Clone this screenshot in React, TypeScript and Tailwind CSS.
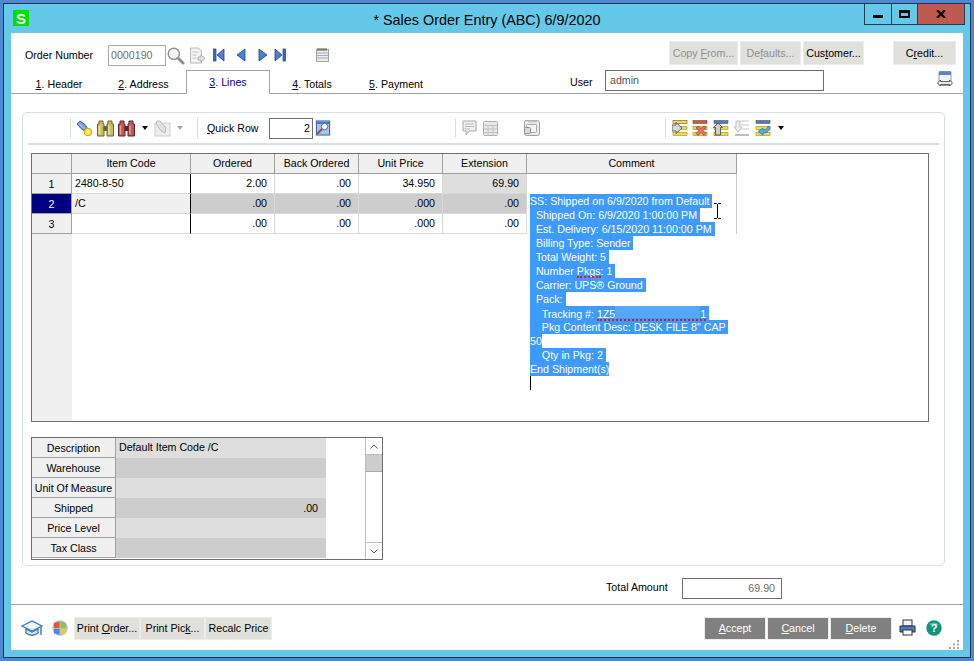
import React from "react";

const NavIcon: React.FC<{ dir: "first" | "prev" | "next" | "last" }> = ({ dir }) => {
  const flip = dir === "next" || dir === "last";
  const bar = dir === "first" || dir === "last";
  return (
    <svg width="12" height="14" viewBox="0 0 12 14" className={flip ? "-scale-x-100" : ""}>
      {bar && <rect x="0.5" y="1" width="2.5" height="12" fill="#3f6fc0" stroke="#1f3f80" strokeWidth="0.7" />}
      <path d={bar ? "M11 1v12L4 7z" : "M10 1v12L2 7z"} fill="#4f7fd0" stroke="#1f3f80" strokeWidth="0.8" />
    </svg>
  );
};

const SearchIcon = () => (
  <svg width="18" height="18" viewBox="0 0 18 18">
    <path d="M10.5 10.5l5.5 5.5" stroke="#8f8f8a" strokeWidth="3" strokeLinecap="round" />
    <circle cx="6.8" cy="6.8" r="5.6" fill="#f2f5f5" stroke="#8c9090" strokeWidth="1.4" />
  </svg>
);

const DocArrowIcon = () => (
  <svg width="17" height="17" viewBox="0 0 17 17">
    <path d="M1.5 1h8l3 3v12h-11z" fill="#f3f3f3" stroke="#b5b5b5" />
    <path d="M3.500 5h6M3.500 8h4M3.500 11h4" stroke="#c4c4c4" />
    <path d="M9 10h3V8l4 3.500-4 3.500v-2H9z" fill="#e6e6e6" stroke="#a8a8a8" />
  </svg>
);

const NotebookIcon = () => (
  <svg width="13" height="14" viewBox="0 0 13 14">
    <rect x="0.5" y="1.500" width="12" height="12" fill="#f4ecd8" stroke="#9ca3a8" />
    <path d="M1 5h11M1 7.500h11M1 10h11" stroke="#8fb0d8" />
    <path d="M2 0v3M4 0v3M6 0v3M8 0v3M10 0v3" stroke="#555" />
  </svg>
);

const Flashlight = () => (
  <svg width="17" height="17" viewBox="0 0 17 17">
    <path d="M1 4l3-3 5 3.500 2 3-3 3-3-2z" fill="#7f9fe0" stroke="#3c5a98" />
    <path d="M3 3.500l5 5" stroke="#c8d8f8" />
    <circle cx="12" cy="12" r="3.800" fill="#fbe34a" stroke="#c4a410" />
    <circle cx="12" cy="12" r="1.500" fill="#fff8c0" />
  </svg>
);

const Binoculars: React.FC<{ fill: string; stroke: string; light: string }> = ({ fill, stroke, light }) => (
  <svg width="17" height="17" viewBox="0 0 17 17">
    <path d="M2 1h4v3h1v12H.5V4H2zM11 1h4v3h1.500v12H10V4h1z" fill={fill} stroke={stroke} />
    <rect x="6.500" y="6" width="4" height="5" fill={stroke} />
    <path d="M2.500 5.500v9M12 5.500v9" stroke={light} strokeWidth="1.500" />
  </svg>
);

const Caret: React.FC<{ color?: string; className?: string }> = ({ color = "#000", className }) => (
  <svg width="6" height="4" viewBox="0 0 6 4" className={className}>
    <path d="M0 0h6L3 4z" fill={color} />
  </svg>
);

const DisabledPage = () => (
  <svg width="17" height="17" viewBox="0 0 17 17">
    <rect x="1" y="3" width="15" height="13" fill="#eeeeee" stroke="#cfcfcf" />
    <path d="M3 1l3 0 6 7-1 5-4-2-5-7z" fill="#e0e0e0" stroke="#bdbdbd" />
  </svg>
);

const QuickFind = () => (
  <svg width="16" height="16" viewBox="0 0 16 16">
    <rect width="16" height="16" fill="#efe9d8" />
    <rect x="1.500" y="1" width="13" height="14" fill="#a8c4ec" stroke="#3c68b0" />
    <path d="M2 2h12v2H2z" fill="#4a78c8" />
    <circle cx="9.500" cy="6.500" r="3.200" fill="#ffffff" stroke="#3c68b0" />
    <path d="M7 9l-5 5" stroke="#a04a40" strokeWidth="2" />
  </svg>
);

const CommentIcon = () => (
  <svg width="15" height="17" viewBox="0 0 15 17">
    <path d="M1 1h13v10H7l-3 4v-4H1z" fill="#f0f0f0" stroke="#a8a8a8" />
    <path d="M3 4h9M3 6.500h9M3 9h5" stroke="#b8b8b8" />
  </svg>
);

const GridIcon = () => (
  <svg width="15" height="15" viewBox="0 0 15 15">
    <rect x="0.5" y="0.5" width="14" height="14" rx="1" fill="#e8e8e8" stroke="#adadad" />
    <path d="M0.5 4.500h14M0.5 8h14M0.5 11.500h14M5 4v11M10 4v11" stroke="#c2c2c2" />
  </svg>
);

const WindowsIcon = () => (
  <svg width="16" height="16" viewBox="0 0 16 16">
    <rect x="0.5" y="0.5" width="15" height="15" rx="2" fill="#ececec" stroke="#9f9f9f" />
    <path d="M4 1.500h9" stroke="#c5c5c5" strokeWidth="2" />
    <rect x="2.500" y="4.500" width="10" height="8" rx="1" fill="#f4f4f4" stroke="#a8a8a8" />
    <rect x="0.5" y="7.500" width="6" height="6" rx="1" fill="#dadada" stroke="#8f8f8f" />
  </svg>
);

const RowsBase: React.FC<{ top?: string; children?: React.ReactNode }> = ({ top = "#4f78c8", children }) => (
  <svg width="16" height="16" viewBox="0 0 16 16">
    <rect x="1" y="0.5" width="14" height="3" fill={top} stroke="#5a5a30" strokeWidth="0.6" />
    <rect x="1" y="6.500" width="14" height="3" fill="#f6d84a" stroke="#a08a10" strokeWidth="0.6" />
    <rect x="1" y="12.500" width="14" height="3" fill="#f6d84a" stroke="#a08a10" strokeWidth="0.6" />
    {children}
  </svg>
);

const GraduationCap = () => (
  <svg width="22" height="17" viewBox="0 0 22 17">
    <path d="M1 6l10-5 10 5-10 5z" fill="#eef4fb" stroke="#3f77ae" strokeWidth="1.300" />
    <path d="M5 9v4c3 3 9 3 12 0V9l-6 3z" fill="#dbe8f5" stroke="#3f77ae" strokeWidth="1.300" />
    <path d="M20 7v8" stroke="#3f77ae" strokeWidth="1.400" />
  </svg>
);

const WindowsBall = () => (
  <svg width="16" height="16" viewBox="0 0 16 16">
    <circle cx="8" cy="8" r="7.700" fill="#a9bfe4" />
    <path d="M2 3l5.500-1.200v6L2 8.200z" fill="#e8562c" />
    <path d="M8.500 1.800L14 3v5.200l-5.500-.4z" fill="#8cc63f" />
    <path d="M2 9l5.500-.3v6L2 13.200z" fill="#3f8ee0" />
    <path d="M8.500 8.700L14 9v4.200l-5.500 1.500z" fill="#f9c623" />
  </svg>
);

const Printer = () => (
  <svg width="17" height="17" viewBox="0 0 17 17">
    <rect x="4" y="1" width="9" height="6" fill="#f6f6f6" stroke="#333" />
    <path d="M1 7h15v6H1z" fill="#4f78c0" stroke="#1f2f55" />
    <rect x="4" y="11" width="9" height="5" fill="#ffffff" stroke="#333" />
  </svg>
);

const HelpIcon = () => (
  <svg width="16" height="16" viewBox="0 0 16 16">
    <circle cx="8" cy="8" r="7.700" fill="#12937c" />
    <path d="M3 5a5.500 4 0 0 1 10 0z" fill="#4fc4ac" />
    <text x="8" y="12" textAnchor="middle" fontSize="11" fontWeight="bold" fill="#fff" fontFamily="Liberation Sans, sans-serif">?</text>
  </svg>
);

const TransferIcon = () => (
  <svg width="16" height="17" viewBox="0 0 16 17">
    <rect x="2" y="0.5" width="12" height="14" rx="1" fill="#eef1f8" stroke="#8a9ab8" />
    <rect x="2" y="0.5" width="12" height="3.500" fill="#5a82cc" />
    <path d="M0.5 12l3-3v1.600h9V9l3 3-3 3v-1.600h-9V15z" fill="#f5f5f5" stroke="#555" />
  </svg>
);

const Grip = () => (
  <svg width="12" height="9" viewBox="0 0 12 9">
    <path d="M9 0h2v2H9zM5 3.500h2v2H5zM9 3.500h2v2H9zM1 7h2v2H1zM5 7h2v2H5zM9 7h2v2H9z" fill="#a8a8a8" />
  </svg>
);

const Sep: React.FC<{ ml: string }> = ({ ml }) => <div className={`${ml} h-[20px] w-[1px] bg-[#d5dfe8]`} />;

const Ul: React.FC<{ children: React.ReactNode }> = ({ children }) => <span className="underline underline-offset-1">{children}</span>;

const FlatButton: React.FC<{ className: string; children: React.ReactNode }> = ({ className, children }) => (
  <div className={`flex items-center justify-center border border-[#ececea] bg-[#e0e0dc] ${className}`}>{children}</div>
);

const Tab: React.FC<{ n: string; label: string; w: string; active?: boolean }> = ({ n, label, w, active }) => (
  <div
    className={`${w} flex justify-center ${
      active
        ? "relative -mb-[1px] h-[24px] items-start border border-b-0 border-[#a3a3a3] bg-white pt-[6px] text-[#000098]"
        : "items-end pb-[3px]"
    }`}
  >
    <span>
      <Ul>{n}</Ul>. {label}
    </span>
  </div>
);

const columns = [
  { name: "Item Code", w: "w-[119px]" },
  { name: "Ordered", w: "w-[84px]" },
  { name: "Back Ordered", w: "w-[84px]" },
  { name: "Unit Price", w: "w-[84px]" },
  { name: "Extension", w: "w-[84px]" },
  { name: "Comment", w: "w-[210px]" },
];

const rows = [
  { num: "1", cells: ["2480-8-50", "2.00", ".00", "34.950", "69.90"] },
  { num: "2", cells: ["/C", ".00", ".00", ".000", ".00"] },
  { num: "3", cells: ["", ".00", ".00", ".000", ".00"] },
];

const cellBg = (rowIdx: number, colIdx: number) => {
  if (rowIdx === 1) return colIdx === 0 ? "bg-[#f0f0f0]" : "bg-[#cdcdcd]";
  if (rowIdx === 0 && colIdx === 4) return "bg-[#dedede]";
  return "bg-white";
};

const SalesGrid = () => (
  <div className="relative ml-[8px] flex h-[269px] w-[898px] border border-[#6e6e6e] bg-white">
    <div className="w-[40px] bg-[#f0f0f0]">
      <div className="h-[20px] border-r border-b border-[#a0a0a0]" />
      {rows.map((r) => (
        <div
          key={r.num}
          className={`flex h-[20px] items-center justify-center border-r border-b border-[#a0a0a0] pt-[1px] ${
            r.num === "2" ? "bg-[#000080] text-white" : ""
          }`}
        >
          {r.num}
        </div>
      ))}
    </div>
    <div className="flex-1">
      <div className="flex h-[20px]">
        {columns.map((c) => (
          <div
            key={c.name}
            className={`${c.w} flex items-center justify-center border-r border-b border-[#a0a0a0] bg-[#f0f0f0]`}
          >
            {c.name}
          </div>
        ))}
      </div>
      {rows.map((r, i) => (
        <div key={r.num} className="flex h-[20px]">
          {r.cells.map((v, j) => (
            <div
              key={j}
              className={`${columns[j].w} ${cellBg(i, j)} flex items-center border-b border-[#d8d8d8] ${
                j === 0 ? "border-r border-r-black pl-[3px]" : "justify-end border-r border-r-[#d8d8d8] pr-[7px]"
              }`}
            >
              {v}
            </div>
          ))}
          <div className="w-[210px] border-r border-[#c8c8c8] bg-white" />
        </div>
      ))}
    </div>
    <CommentEditor />
  </div>
);

const Sel: React.FC<{ children: React.ReactNode }> = ({ children }) => (
  <div className="h-[14px] leading-[14px]">
    <span className="inline-block h-[14px] bg-[#3d9bff] whitespace-pre text-white">{children}</span>
  </div>
);

const Squiggle: React.FC<{ children: React.ReactNode }> = ({ children }) => (
  <span className="relative">
    {children}
    <span className="absolute right-0 -bottom-[1px] left-0 z-10 h-[2px] border-b-2 border-dotted border-[#e01818]" />
  </span>
);

// selected text of the comment editor hangs over the grid
const CommentEditor = () => (
  <div className="absolute top-[40px] left-[498px] w-[196px]">
    <Sel>SS: Shipped on 6/9/2020 from Default </Sel>
    <Sel>  Shipped On: 6/9/2020 1:00:00 PM </Sel>
    <Sel>  Est. Delivery: 6/15/2020 11:00:00 PM </Sel>
    <Sel>  Billing Type: Sender </Sel>
    <Sel>  Total Weight: 5 </Sel>
    <Sel>
      {"  Number "}
      <Squiggle>Pkgs</Squiggle>: 1{" "}
    </Sel>
    <Sel>  Carrier: UPS® Ground </Sel>
    <Sel>  Pack: </Sel>
    <Sel>
      {"    Tracking #: "}
      <Squiggle>
        1Z5
        <span className="inline-block h-[12px] w-[85px] bg-[#55a8ff]" />1
      </Squiggle>{" "}
    </Sel>
    <Sel>    Pkg Content Desc: DESK FILE 8" CAP </Sel>
    <Sel>50</Sel>
    <Sel>    Qty in Pkg: 2 </Sel>
    <Sel>End Shipment(s)</Sel>
    <div className="h-[14px] w-[1px] bg-black" />
    <svg width="9" height="16" viewBox="0 0 9 16" className="absolute top-[9px] left-[183px]">
      <path d="M1 .5h2.500l1 1 1-1H8M4.500 1.500v13M1 15.500h2.500l1-1 1 1H8" fill="none" stroke="#000" />
    </svg>
  </div>
);

const details = ["Description", "Warehouse", "Unit Of Measure", "Shipped", "Price Level", "Tax Class"];

const DetailGrid = () => (
  <div className="mt-[15px] ml-[8px] flex h-[123px] w-[352px] border border-[#6e6e6e] bg-white">
    <div className="w-[294px]">
      {details.map((d, i) => (
        <div key={d} className="flex h-[20px]">
          <div className="flex w-[84px] items-center justify-center border-r border-b border-[#a0a0a0] bg-[#f0f0f0] pt-[1px] whitespace-nowrap">
            {d}
          </div>
          <div className={`flex w-[210px] items-center ${i % 2 === 0 ? "bg-[#dedede]" : "bg-[#cdcdcd]"} ${i === 3 ? "justify-end pr-[8px]" : "pb-[2px] pl-[3px]"}`}>
            {i === 0 ? "Default Item Code /C" : i === 3 ? ".00" : ""}
          </div>
        </div>
      ))}
    </div>
    <div className="flex-1" />
    <div className="flex w-[17px] flex-col border-l border-[#bdbdbd]">
      <div className="flex h-[17px] items-center justify-center border-b border-[#bdbdbd]">
        <svg width="8" height="5" viewBox="0 0 8 5">
          <path d="M.5 4.500L4 1l3.500 3.500" fill="none" stroke="#555" />
        </svg>
      </div>
      <div className="h-[17px] border-b border-[#a8a8a8] bg-[#cdcdcd]" />
      <div className="flex-1" />
      <div className="flex h-[17px] items-center justify-center border-t border-[#bdbdbd]">
        <svg width="8" height="5" viewBox="0 0 8 5">
          <path d="M.5.5L4 4 7.500.5" fill="none" stroke="#555" />
        </svg>
      </div>
    </div>
  </div>
);

const Toolbar = () => (
  <div className="mx-[5px] flex h-[32px] items-center border-b-2 border-[#d5dfe8]">
    <Sep ml="ml-[42px]" />
    <div className="ml-[5px]"><Flashlight /></div>
    <div className="ml-[4px]"><Binoculars fill="#c9bb6a" stroke="#6f6420" light="#e8e0a8" /></div>
    <div className="ml-[4px]"><Binoculars fill="#b85a5a" stroke="#6a2020" light="#e0a0a0" /></div>
    <Caret className="ml-[7px]" />
    <div className="ml-[6px]"><DisabledPage /></div>
    <Caret color="#a8a8a8" className="ml-[6px]" />
    <Sep ml="ml-[14px]" />
    <span className="ml-[9px] w-[62px]">
      <Ul>Q</Ul>uick Row
    </span>
    <div className="flex h-[21px] w-[44px] items-center justify-end border border-[#6e6e6e] pr-[2px]">2</div>
    <div className="ml-[2px]"><QuickFind /></div>
    <Sep ml="ml-[124px]" />
    <div className="ml-[6px]"><CommentIcon /></div>
    <div className="ml-[6px]"><GridIcon /></div>
    <div className="ml-[26px]"><WindowsIcon /></div>
    <Sep ml="ml-[125px]" />
    <div className="ml-[6px]">
      <RowsBase top="#f6d84a">
        <path d="M0 5h4V2.500L10 8l-6 5.500V11H0z" fill="#d8d8d8" stroke="#444" strokeWidth="0.8" />
      </RowsBase>
    </div>
    <div className="ml-[4px]">
      <RowsBase top="#d85050">
        <path d="M6 6l3 2.500L12 6l2 2-3 2.500 3 3-2 2-3-3-3 3-2-2 3-3-3-2.500z" fill="#e87070" stroke="#a03030" strokeWidth="0.7" />
      </RowsBase>
    </div>
    <div className="ml-[5px]">
      <RowsBase>
        <path d="M5 3l4.500 4.500H7.500V15h-5V7.500H.5z" fill="#cfcfcf" stroke="#444" strokeWidth="0.8" />
      </RowsBase>
    </div>
    <div className="ml-[5px]">
      <svg width="16" height="16" viewBox="0 0 16 16">
        <path d="M6 1h9M7 5h8M7 9h8" stroke="#e4e4e4" strokeWidth="2" />
        <path d="M2 1h4v6h2l-4 5-4-5h2z" fill="#ececec" stroke="#bdbdbd" />
        <path d="M1 15h14" stroke="#bdbdbd" strokeWidth="2" />
      </svg>
    </div>
    <div className="ml-[5px]">
      <RowsBase>
        <path d="M15 7c0 4-3 6-7 6v2L3 11.500 8 8v2c3 0 4-1 5-4z" fill="#4fb0e8" stroke="#1f6fa8" strokeWidth="0.7" />
      </RowsBase>
    </div>
    <Caret className="ml-[7px]" />
  </div>
);

const GrayButton: React.FC<{ ml: string; w: string; children: React.ReactNode }> = ({ ml, w, children }) => (
  <div className={`${ml} ${w} mt-[12px] flex h-[23px] items-center justify-center border border-[#ececea] bg-[#808080] text-white`}>
    <span>{children}</span>
  </div>
);

export default function App() {
  return (
    <div className="h-[661px] w-[974px] overflow-hidden bg-[#4f87d0] p-[3px] font-['Liberation_Sans',Arial,sans-serif] text-[10.67px] leading-none text-black">
      <div className="flex h-[655px] w-[968px] flex-col border border-[#1d3550] bg-[#64c8e9]">
        <div className="flex h-[29px] shrink-0">
          <div className="w-[106px] pt-[6px] pl-[9px]">
            <div className="flex h-[16px] w-[16px] items-center justify-center bg-[#00e000] text-[15px] font-bold text-white">S</div>
          </div>
          <div className="flex flex-1 items-start justify-center pt-[8px] text-[14.4px] leading-[16px]">* Sales Order Entry (ABC) 6/9/2020</div>
          <div className="flex w-[106px] items-start pr-[5px]">
            <div className="flex h-[21px] w-[101px] border border-t-0 border-[#2a3a4a]">
              <div className="flex w-[27px] items-end justify-center border-r border-[#2a3a4a] pb-[6px]">
                <div className="h-[3px] w-[10px] bg-black" />
              </div>
              <div className="flex w-[26px] items-center justify-center border-r border-[#2a3a4a]">
                <div className="h-[8px] w-[11px] border-2 border-t-[3px] border-black" />
              </div>
              <div className="flex flex-1 items-center justify-center bg-[#c05a50]">
                <svg width="10" height="8" viewBox="0 0 10 8">
                  <path d="M1 0l8 8M9 0L1 8" stroke="#000" strokeWidth="2.200" fill="none" />
                </svg>
              </div>
            </div>
          </div>
        </div>

        <div className="mx-[7px] flex h-[617px] w-[952px] shrink-0 flex-col bg-white">
          <div className="flex h-[37px] shrink-0 items-start">
            <span className="mt-[17px] ml-[14px] w-[83px]">Order Number</span>
            <div className="mt-[12px] flex h-[21px] w-[58px] items-center border border-[#a8a8a8] pl-[2px] text-[#6e6e6e]">0000190</div>
            <div className="mt-[14px] ml-[1px]"><SearchIcon /></div>
            <div className="mt-[14px] ml-[4px]"><DocArrowIcon /></div>
            <div className="mt-[15px] ml-[7px]"><NavIcon dir="first" /></div>
            <div className="mt-[15px] ml-[10px]"><NavIcon dir="prev" /></div>
            <div className="mt-[15px] ml-[10px]"><NavIcon dir="next" /></div>
            <div className="mt-[15px] ml-[5px]"><NavIcon dir="last" /></div>
            <div className="mt-[15px] ml-[30px]"><NotebookIcon /></div>
            <FlatButton className="mt-[8px] ml-[340px] h-[24px] w-[69px] text-[#8f8f8f]">
              <span>Copy <Ul>F</Ul>rom...</span>
            </FlatButton>
            <FlatButton className="mt-[8px] ml-[2px] h-[24px] w-[61px] text-[#8f8f8f]">
              <span>De<Ul>f</Ul>aults...</span>
            </FlatButton>
            <FlatButton className="mt-[8px] ml-[2px] h-[24px] w-[61px]">
              <span>Cus<Ul>t</Ul>omer...</span>
            </FlatButton>
            <FlatButton className="mt-[8px] ml-[29px] h-[24px] w-[63px]">
              <span>C<Ul>r</Ul>edit...</span>
            </FlatButton>
          </div>

          <div className="flex h-[24px] shrink-0 items-start border-b border-[#a3a3a3] pl-[6px]">
            <Tab n="1" label="Header" w="h-full w-[84px]" />
            <Tab n="2" label="Address" w="h-full w-[85px]" />
            <Tab n="3" label="Lines" w="w-[84px]" active />
            <Tab n="4" label="Totals" w="h-full w-[84px]" />
            <Tab n="5" label="Payment" w="h-full w-[84px]" />
            <span className="mt-[7px] ml-[132px] w-[35px]">User</span>
            <div className="flex h-[21px] w-[219px] items-center border border-[#6e6e6e] pl-[4px] text-[#555]">admin</div>
            <div className="mt-[1px] ml-[113px]"><TransferIcon /></div>
          </div>

          <div className="mt-[18px] ml-[11px] h-[454px] w-[923px] shrink-0 rounded-[5px] border border-[#d5dfe8]">
            <Toolbar />
            <div className="mt-[8px]">
              <SalesGrid />
              <DetailGrid />
            </div>
          </div>

          <div className="flex h-[38px] shrink-0 items-start">
            <span className="mt-[16px] ml-[595px] w-[76px]">Total Amount</span>
            <div className="mt-[12px] flex h-[21px] w-[100px] items-center justify-end border border-[#6e6e6e] pr-[6px] text-[#6e6e6e]">69.90</div>
          </div>

          <div className="flex flex-1 items-start border-t border-[#a3a3a3]">
            <div className="mt-[15px] ml-[10px]"><GraduationCap /></div>
            <div className="mt-[15px] ml-[9px]"><WindowsBall /></div>
            <FlatButton className="mt-[12px] ml-[6px] h-[23px] w-[66px]">
              <span>Print <Ul>O</Ul>rder...</span>
            </FlatButton>
            <FlatButton className="mt-[12px] h-[23px] w-[65px]">
              <span>Print Pic<Ul>k</Ul>...</span>
            </FlatButton>
            <FlatButton className="mt-[12px] h-[23px] w-[67px]">Recalc Price</FlatButton>
            <GrayButton ml="ml-[432px]" w="w-[62px]"><Ul>A</Ul>ccept</GrayButton>
            <GrayButton ml="ml-[1px]" w="w-[62px]"><Ul>C</Ul>ancel</GrayButton>
            <GrayButton ml="ml-[1px]" w="w-[62px]"><Ul>D</Ul>elete</GrayButton>
            <div className="mt-[14px] ml-[7px]"><Printer /></div>
            <div className="mt-[15px] ml-[10px]"><HelpIcon /></div>
            <div className="mt-[35px] ml-[6px]"><Grip /></div>
          </div>
        </div>
      </div>
    </div>
  );
}
